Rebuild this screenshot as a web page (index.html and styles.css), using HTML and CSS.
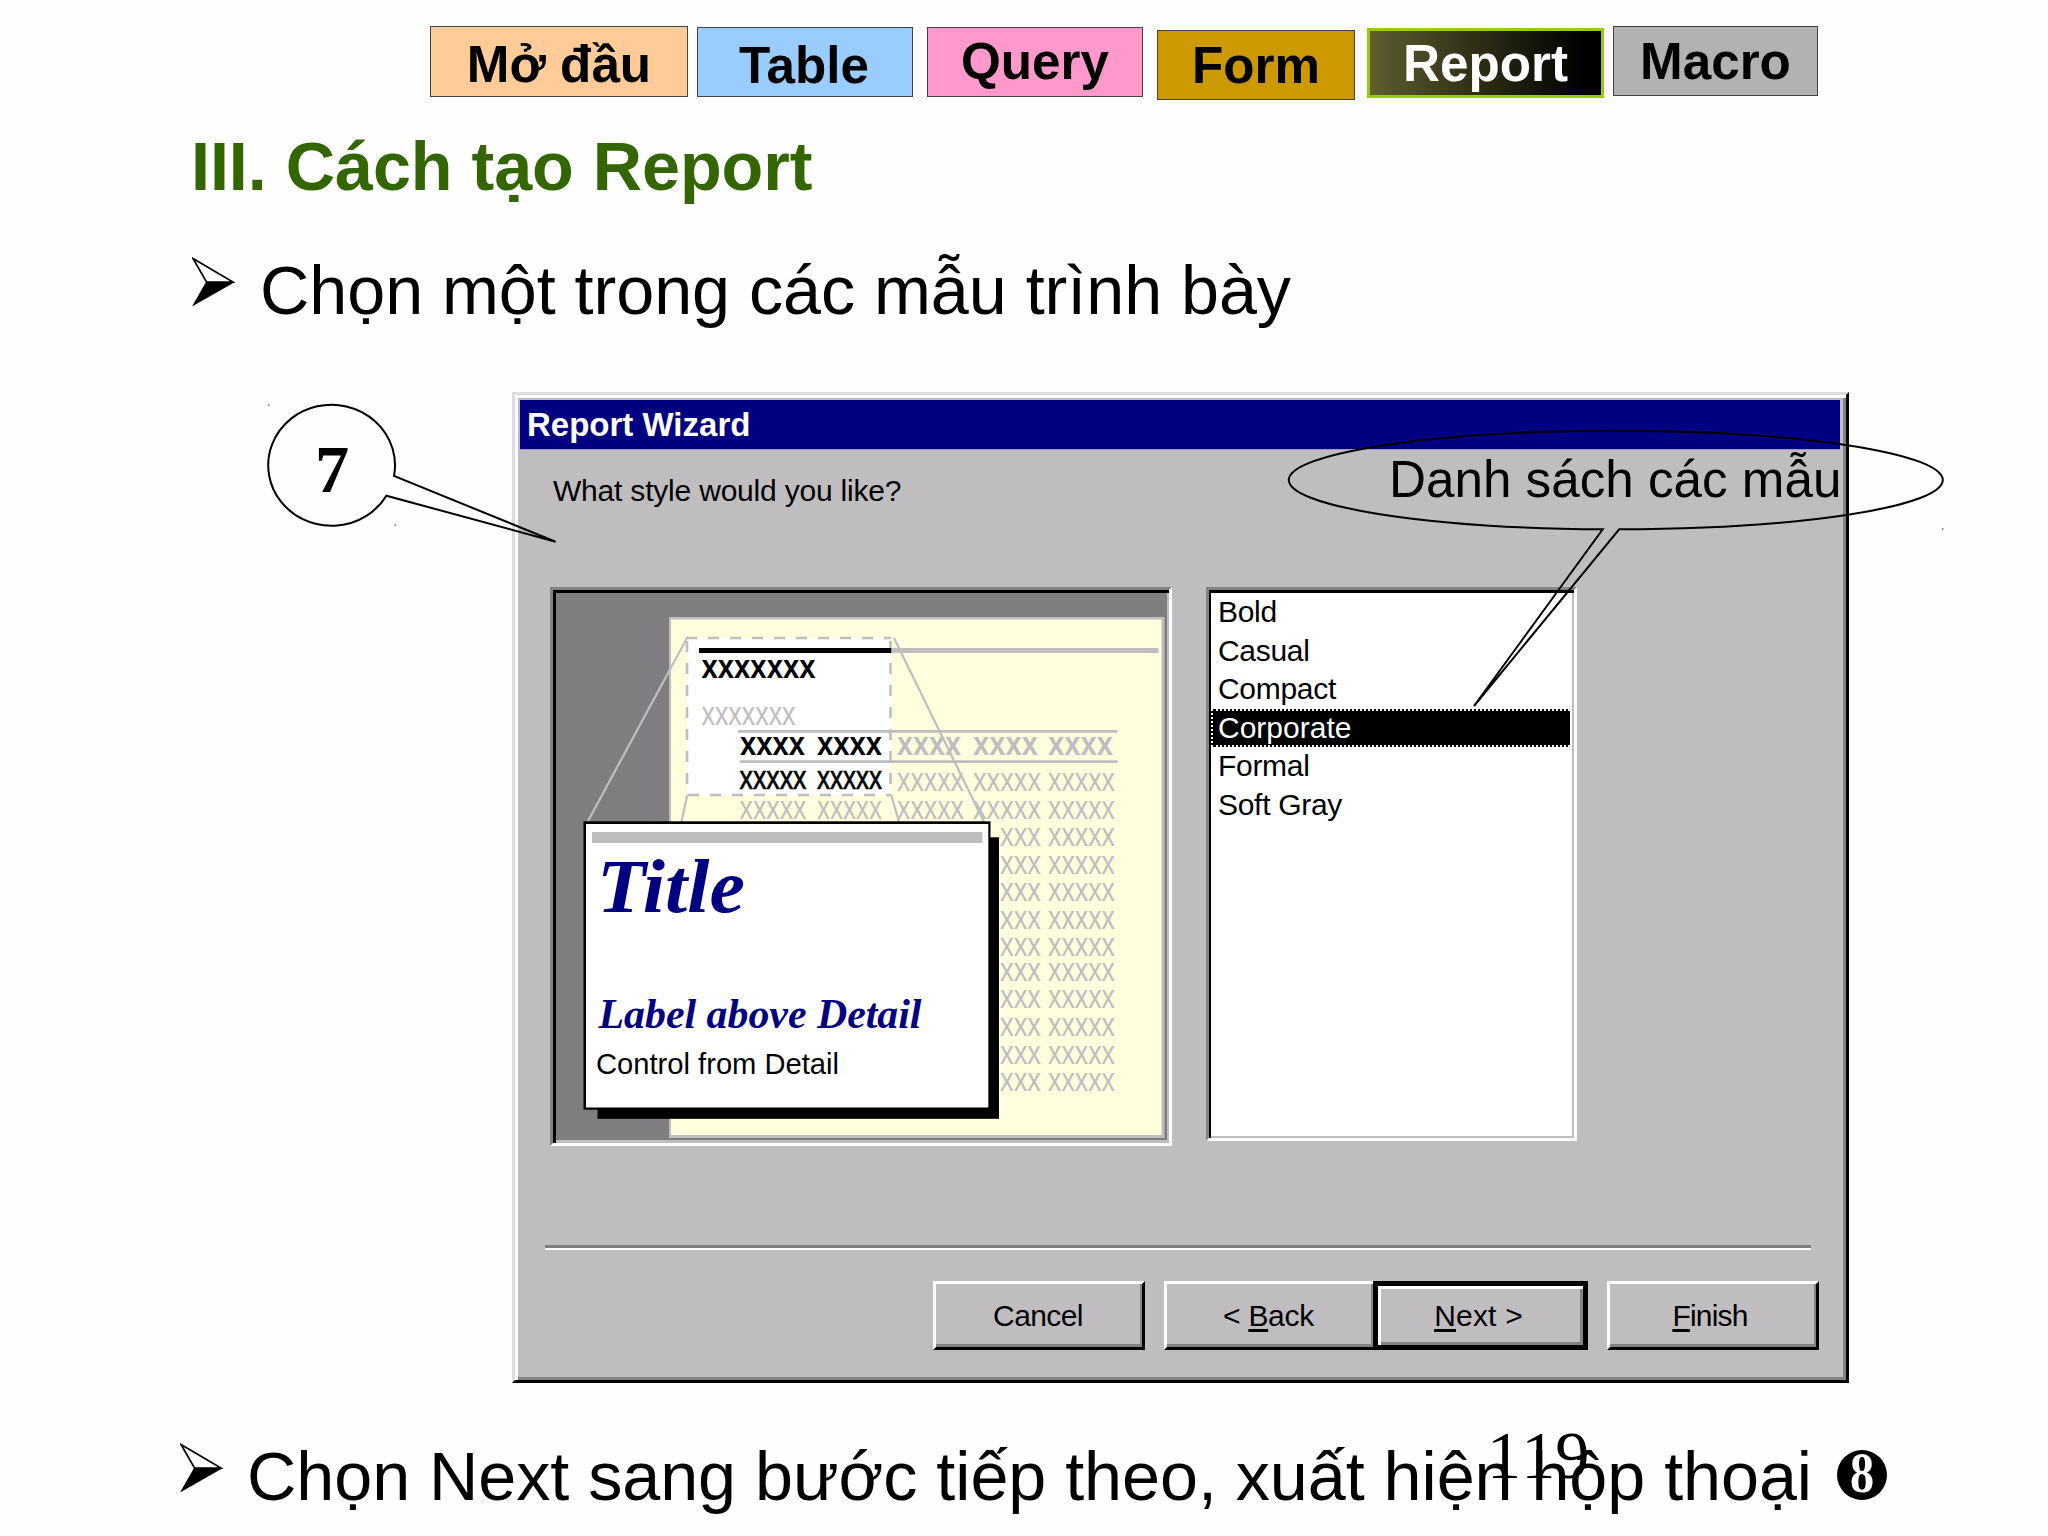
FILE: index.html
```html
<!DOCTYPE html>
<html lang="vi">
<head>
<meta charset="utf-8">
<title>III. Cách tạo Report</title>
<link rel="stylesheet" href="styles.css">
</head>
<body>
<main class="slide">
  <nav class="tabs">
    <span class="tab tab-intro">Mở đầu</span>
    <span class="tab tab-table">Table</span>
    <span class="tab tab-query">Query</span>
    <span class="tab tab-form">Form</span>
    <span class="tab tab-report">Report</span>
    <span class="tab tab-macro">Macro</span>
  </nav>
  <h1 class="heading">III. Cách tạo Report</h1>
  <p class="point">
    <svg class="arrow" viewBox="0 0 43 50"><path class="arrow-top" d="M1 1.5L41 25H14.500Z"/><path d="M0 49.500L14 25H43Z"/></svg>
    <span>Chọn một trong các mẫu trình bày</span>
  </p>

  <section class="dialog">
    <header class="titlebar">Report Wizard</header>
    <p class="question">What style would you like?</p>
    <div class="panes">
      <div class="preview">
        <svg class="art" viewBox="556 593 611 547">
          <rect class="edge" x="669" y="617" width="495.500" height="521"/>
          <rect class="paper" x="671" y="619.500" width="490.500" height="515.500"/>
          <rect class="white" x="687" y="638" width="204" height="157"/>
          <path class="dash" d="M686 638H891M687 641V796M890.500 641V796M688 795H891"/>
          <path class="thin" d="M687 638L588 821M894 638L984 822M687 796L681.500 822M891.500 796L899 822"/>
          <rect x="699" y="648" width="192.500" height="5"/>
          <rect class="edge" x="891.500" y="648" width="267" height="5"/>
          <path class="rule" d="M738 731.300H1117.500M740 761.600H1117.500"/>
          <g class="bold">
            <text x="701.500" y="678" textLength="114" lengthAdjust="spacingAndGlyphs">xxxxxxx</text>
            <text x="740" y="755" textLength="65" lengthAdjust="spacingAndGlyphs">xxxx</text>
            <text x="817" y="755" textLength="65" lengthAdjust="spacingAndGlyphs">xxxx</text>
          </g>
          <g class="bold pale">
            <text x="897" y="755" textLength="64" lengthAdjust="spacingAndGlyphs">xxxx</text>
            <text x="973" y="755" textLength="65" lengthAdjust="spacingAndGlyphs">xxxx</text>
            <text x="1048" y="755" textLength="65" lengthAdjust="spacingAndGlyphs">xxxx</text>
          </g>
          <g class="semi">
            <text x="739.500" y="788.500" textLength="67" lengthAdjust="spacingAndGlyphs">xxxxx</text>
            <text x="817" y="788.500" textLength="65" lengthAdjust="spacingAndGlyphs">xxxxx</text>
          </g>
          <g class="pale">
            <text x="701.500" y="725" textLength="94" lengthAdjust="spacingAndGlyphs">xxxxxxx</text>
            <text x="897" y="791" textLength="67" lengthAdjust="spacingAndGlyphs">xxxxx</text>
            <text x="973" y="791" textLength="68" lengthAdjust="spacingAndGlyphs">xxxxx</text>
            <text x="1048" y="791" textLength="67" lengthAdjust="spacingAndGlyphs">xxxxx</text>
            <text x="739.500" y="818.500" textLength="67" lengthAdjust="spacingAndGlyphs">xxxxx</text>
            <text x="817" y="818.500" textLength="65" lengthAdjust="spacingAndGlyphs">xxxxx</text>
            <text x="897" y="818.500" textLength="67" lengthAdjust="spacingAndGlyphs">xxxxx</text>
            <text x="973" y="818.500" textLength="68" lengthAdjust="spacingAndGlyphs">xxxxx</text>
            <text x="1048" y="818.500" textLength="67" lengthAdjust="spacingAndGlyphs">xxxxx</text>
            <text x="1000" y="846" textLength="41" lengthAdjust="spacingAndGlyphs">xxx</text>
            <text x="1048" y="846" textLength="67" lengthAdjust="spacingAndGlyphs">xxxxx</text>
            <text x="1000" y="873.700" textLength="41" lengthAdjust="spacingAndGlyphs">xxx</text>
            <text x="1048" y="873.700" textLength="67" lengthAdjust="spacingAndGlyphs">xxxxx</text>
            <text x="1000" y="901" textLength="41" lengthAdjust="spacingAndGlyphs">xxx</text>
            <text x="1048" y="901" textLength="67" lengthAdjust="spacingAndGlyphs">xxxxx</text>
            <text x="1000" y="928.700" textLength="41" lengthAdjust="spacingAndGlyphs">xxx</text>
            <text x="1048" y="928.700" textLength="67" lengthAdjust="spacingAndGlyphs">xxxxx</text>
            <text x="1000" y="956.400" textLength="41" lengthAdjust="spacingAndGlyphs">xxx</text>
            <text x="1048" y="956.400" textLength="67" lengthAdjust="spacingAndGlyphs">xxxxx</text>
            <text x="1000" y="980.700" textLength="41" lengthAdjust="spacingAndGlyphs">xxx</text>
            <text x="1048" y="980.700" textLength="67" lengthAdjust="spacingAndGlyphs">xxxxx</text>
            <text x="1000" y="1008.400" textLength="41" lengthAdjust="spacingAndGlyphs">xxx</text>
            <text x="1048" y="1008.400" textLength="67" lengthAdjust="spacingAndGlyphs">xxxxx</text>
            <text x="1000" y="1036" textLength="41" lengthAdjust="spacingAndGlyphs">xxx</text>
            <text x="1048" y="1036" textLength="67" lengthAdjust="spacingAndGlyphs">xxxxx</text>
            <text x="1000" y="1063.700" textLength="41" lengthAdjust="spacingAndGlyphs">xxx</text>
            <text x="1048" y="1063.700" textLength="67" lengthAdjust="spacingAndGlyphs">xxxxx</text>
            <text x="1000" y="1091.400" textLength="41" lengthAdjust="spacingAndGlyphs">xxx</text>
            <text x="1048" y="1091.400" textLength="67" lengthAdjust="spacingAndGlyphs">xxxxx</text>
          </g>
          <rect x="597.500" y="837.300" width="401.500" height="281.500"/>
          <rect x="583.500" y="821.300" width="407" height="288.400"/>
          <rect class="white" x="586" y="824" width="402.300" height="283.500"/>
          <rect class="edge" x="592" y="832" width="390.500" height="11"/>
          <text class="sample sample-title" x="597" y="912.300" textLength="148" lengthAdjust="spacingAndGlyphs">Title</text>
          <text class="sample sample-label" x="598.500" y="1027.700" textLength="323" lengthAdjust="spacingAndGlyphs">Label above Detail</text>
          <text class="sample-control" x="596" y="1074.300" textLength="243" lengthAdjust="spacingAndGlyphs">Control from Detail</text>
        </svg>
      </div>
      <ul class="list">
        <li>Bold</li>
        <li>Casual</li>
        <li>Compact</li>
        <li class="selected">Corporate</li>
        <li>Formal</li>
        <li>Soft Gray</li>
      </ul>
    </div>
    <hr class="divider">
    <footer class="buttons">
      <button class="btn cancel">Cancel</button>
      <button class="btn back">&lt; <u>B</u>ack</button>
      <button class="btn next"><u>N</u>ext &gt;</button>
      <button class="btn finish"><u>F</u>inish</button>
    </footer>
  </section>

  <p class="point last">
    <svg class="arrow" viewBox="0 0 43 50"><path class="arrow-top" d="M1 1.5L41 25H14.500Z"/><path d="M0 49.500L14 25H43Z"/></svg>
    <span>Chọn Next sang bước tiếp theo, xuất hiện hộp thoại</span>
    <span class="disc"><span class="disc-digit">8</span></span>
  </p>

  <svg class="callouts" viewBox="0 0 2048 1536">
    <path class="balloon" d="M394 476A63.400 60.500 0 1 0 386.400 495.700L555.600 541.700Z"/>
    <path class="balloon" d="M1602.700 529.260A327 49.300 0 0 1 1288.800 480A327 49.300 0 0 1 1615.800 430.700A327 49.300 0 0 1 1942.800 480A327 49.300 0 0 1 1619.200 529.300L1474 706Z"/>
    <path class="speck" d="M268 404h1.500v2h-1.500zM394.500 524h1.500v2h-1.500zM1942 528h1.500v2h-1.500z"/>
  </svg>
  <span class="callout-number">7</span>
  <span class="callout-text">Danh sách các mẫu</span>
  <span class="page-number">119</span>
</main>
</body>
</html>
```
FILE: styles.css
```css
* { box-sizing: border-box; }
body { margin: 0; background: #fefefe; }
p, h1, ul { margin: 0; padding: 0; }

.slide {
  position: relative;
  width: 2048px;
  height: 1536px;
  overflow: hidden;
  display: flex;
  flex-direction: column;
  color: #000;
  font-family: "Liberation Sans", Arial, sans-serif;
}

/* Section tabs */
.tabs {
  height: 100px;
  padding-left: 430px;
  display: flex;
  align-items: flex-start;
  flex: none;
}
.tab {
  height: 70px;
  flex: none;
  border: 1px solid #444;
  font-size: 51.2px;
  font-weight: bold;
  line-height: 70px;
  text-align: center;
  white-space: nowrap;
}
.tab-intro { width: 258px; height: 71px; margin-top: 26px; padding-top: 3px; background: #fc9; }
.tab-table { width: 216px; margin: 27px 0 0 9px; padding: 3px 2px 0 0; background: #9cf; }
.tab-query { width: 216px; margin: 27px 0 0 14px; line-height: 68px; background: #f9c; }
.tab-form { width: 198px; margin: 30px 0 0 14px; background: #c90; }
.tab-report {
  width: 237px;
  margin: 28px 0 0 12px;
  border: 3px solid #9c1;
  line-height: 66px;
  color: #fff;
  background: linear-gradient(90deg, #5e5e30, #000 92%);
}
.tab-macro { width: 205px; margin: 26px 0 0 9px; background: #b2b2b2; line-height: 69px; }

.heading {
  margin: 26px 0 0 191px;
  font-size: 68.3px;
  line-height: 80px;
  letter-spacing: -0.04px;
  color: #360;
}

.point {
  height: 80px;
  margin: 44px 0 0 192px;
  display: flex;
  align-items: flex-start;
  flex: none;
  font-size: 68.3px;
  line-height: 80px;
  letter-spacing: -0.05px;
  white-space: nowrap;
}
.arrow { width: 43px; height: 50px; margin: 7px 25px 0 0; flex: none; }
.arrow-top { fill: none; stroke: #000; stroke-width: 1.7; }
.point.last { margin: 53px 0 0 180px; }
.point.last .arrow { margin-right: 24px; }
.disc {
  width: 50px;
  height: 50px;
  margin: 14px 0 0 25px;
  border-radius: 50%;
  background: #000;
  color: #fff;
  font: bold 56px/46px "Liberation Serif", serif;
  text-align: center;
}
.disc-digit { display: block; transform: scaleX(0.86); }

/* Wizard window */
.dialog {
  width: 1337px;
  height: 991px;
  margin: 62px 0 0 512px;
  padding: 2px 3px 0 2px;
  flex: none;
  border: 3px solid;
  border-color: #dedcdf #000 #000 #dedcdf;
  box-shadow: inset 3px 3px #fff, inset -3px -3px #858285;
  background: #c0bdc0;
  font-size: 30px;
}
.titlebar {
  height: 50px;
  margin: 3px 3px 0;
  padding-left: 7px;
  background: #000080;
  border-bottom: 1px solid #9c9ac0;
  color: #fff;
  font-size: 33px;
  font-weight: bold;
  line-height: 49px;
}
.question { margin: 23px 0 0 36px; line-height: 36px; letter-spacing: -0.2px; }

.panes { display: flex; margin: 78px 0 0 33px; gap: 34px; }
.preview {
  width: 622px;
  height: 559px;
  border: 3px solid;
  border-color: #858285 #fff #fff #858285;
  box-shadow: inset 3px 3px #000, inset -2px -3px #c0bdc0;
  padding: 3px;
  background: #807d80;
}
.art { display: block; width: 611px; height: 547px; font-size: 32.500px; }
.edge { fill: #c0bdc0; }
.paper { fill: #ffffdd; }
.white { fill: #fff; }
.dash { fill: none; stroke: #c0bdc0; stroke-width: 2.600; stroke-dasharray: 11 11; }
.thin { fill: none; stroke: #c0bdc0; stroke-width: 2.200; }
.rule { stroke: #c0bdc0; stroke-width: 2.700; }
.bold { font-weight: bold; }
.semi { stroke: #000; stroke-width: 0.6; }
.pale { fill: #c0bdc0; }
.sample { fill: #000080; font-family: "Liberation Serif", serif; font-weight: bold; font-style: italic; }
.sample-title { font-size: 76px; }
.sample-label { font-size: 42px; }
.sample-control { font-size: 30px; }

.list {
  width: 371px;
  height: 554px;
  padding: 3px 4px 0 2px;
  border: 3px solid;
  border-color: #858285 #fff #fff #858285;
  box-shadow: inset 2px 3px #000, inset -2px -2px #c0bdc0;
  background: #fff;
  list-style: none;
  letter-spacing: -0.3px;
}
.list li { height: 38.600px; padding-left: 7px; line-height: 38px; }
.list .selected {
  color: #fff;
  background: #000;
  border: 2px dotted #fff;
  border-right: 0;
  line-height: 34px;
  padding-left: 5px;
  letter-spacing: 0;
}

.divider {
  width: 1266px;
  height: 5px;
  margin: 99px 0 0 28px;
  border: 0;
  border-top: 3px solid #807d80;
  border-bottom: 2px solid #fff;
}
.buttons { display: flex; margin: 31px 0 0 416px; }
.btn {
  height: 69px;
  padding: 0;
  border: 3px solid;
  border-color: #fff #000 #000 #fff;
  box-shadow: inset -2px -3px #858285;
  border-radius: 0;
  background: #c0bdc0;
  color: #000;
  font: 30px "Liberation Sans", Arial, sans-serif;
  letter-spacing: -0.3px;
}
.btn u { text-decoration-thickness: 2.500px; text-underline-offset: 3px; }
.cancel { width: 212px; padding-right: 2px; letter-spacing: -0.6px; }
.back { width: 209px; margin-left: 19px; padding-right: 3px; border-right-width: 0; }
.next { width: 215px; padding-right: 4px; border: 5px solid #000; box-shadow: inset 3px 3px #fff, inset -3px -3px #858285; letter-spacing: 0.2px; }
.finish { width: 212px; margin-left: 19px; padding-right: 6px; letter-spacing: -0.8px; }

/* Callouts drawn over the window */
.callouts { position: absolute; left: 0; top: 0; width: 2048px; height: 1536px; }
.balloon { fill: none; stroke: #000; stroke-width: 2; }
.speck { fill: #888; }
.callout-number { position: absolute; left: 315px; top: 429px; font: bold 68.300px/80px "Liberation Serif", serif; }
.callout-text { position: absolute; left: 1389px; top: 450px; font-size: 51.200px; line-height: 60px; white-space: nowrap; }
.page-number { position: absolute; left: 1487px; top: 1415px; font: 68.300px/80px "Liberation Serif", serif; font-kerning: none; }
```
